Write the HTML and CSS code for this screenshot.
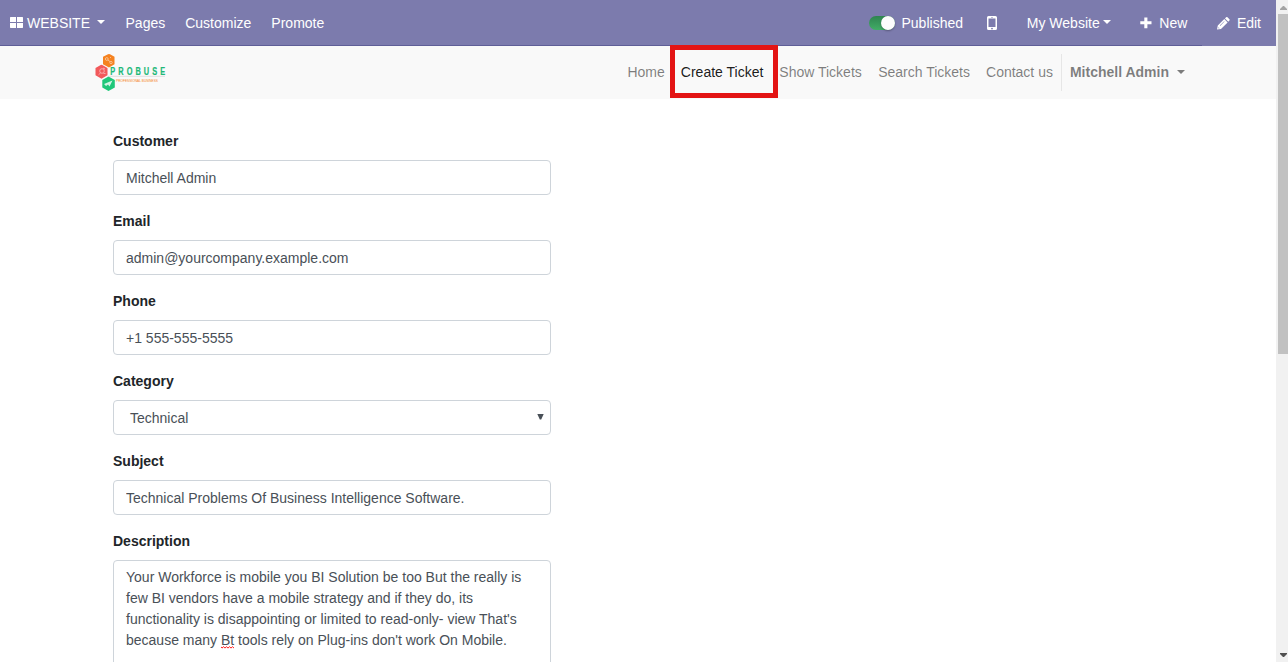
FILE: index.html
```
<!DOCTYPE html>
<html lang="en">
<head>
<meta charset="utf-8">
<title>Create Ticket</title>
<link rel="stylesheet" href="styles.css">
</head>
<body>
<div class="window">
  <div class="page">
    <header class="topbar">
      <nav class="topbar-left">
        <a class="brand"><svg class="icon-grid" width="13" height="11" viewBox="0 0 13 11"><path fill="#fff" d="M.5 0H6v5H0V.5zM7 0h5.500l.5.500V5H7zM0 6h6v5H.5l-.5-.5zM7 6h6v4.500l-.5.500H7z"/></svg>WEBSITE<i class="caret"></i></a>
        <a>Pages</a><a>Customize</a><a>Promote</a>
      </nav>
      <nav class="topbar-right">
        <a class="published"><span class="switch"></span>Published</a>
        <a class="mobile"><svg width="10" height="14" viewBox="0 0 10 14"><path fill="#fff" fill-rule="evenodd" d="M1.500 0h7Q10 0 10 1.500v11Q10 14 8.500 14h-7Q0 14 0 12.500v-11Q0 0 1.500 0zM1.500 2.500v8.500h7V2.500zM4 1v.6h2V1zM5 11.700a.8.8 0 1 0 .01 0z"/></svg></a>
        <a class="site">My Website<i class="caret"></i></a>
        <a class="new"><svg width="12" height="12" viewBox="0 0 12 12"><path fill="#fff" d="M4.300.5h3.100v3.800H11.500v3H7.400v3.900H4.300V7.300H.3v-3h4z"/></svg>New</a>
        <a class="edit"><svg width="13" height="13" viewBox="0 0 13 13"><path fill="#fff" fill-rule="evenodd" d="M0 12.500l.8-3.900L7.300 2.100l3.300 3.300L4 12zM1.500 10.300l-.2.700.5.500.8-.2zM8 1.400L9.100.3q.7-.6 1.400 0l1.900 1.900q.6.700 0 1.400l-1.100 1.100zM2.800 8.600l.3.300 4.400-4.400-.3-.3z"/></svg>Edit</a>
      </nav>
    </header>
    <div class="sitebar">
      <div class="logo">
        <svg width="84" height="40" viewBox="0 0 84 40">
          <path fill="#f58220" d="M14 1.200Q15 .6 16 1.200l4.500 2.500v7.500L15 14.500l-6-3.300V3.700z"/>
          <path fill="#f2595b" d="M8.300 12q-.8-.5-1.600 0L1.500 15v7.300l6 3.500 6-3.500V15z"/>
          <path fill="#1fc779" d="M14.500 23.500l6.300 3.500v7.500l-6.300 3.500-6.200-3.500V27z"/>
          <g fill="none" stroke="#fff" stroke-width=".8" opacity=".6"><circle cx="12.800" cy="6" r="1.400"/><circle cx="17" cy="9.500" r="1.200"/><path d="M14 7l2 1.600M16 4l1 1"/><circle cx="8" cy="18" r="2.300"/><path d="M6.500 20l-2 1.800M9 15l2 1M9.500 20.500h2"/></g>
          <path fill="#fff" opacity=".8" d="M10 31l8.500-3.500-3 6-1.500-2-2 1.500z"/>
          <path stroke="#ccc" stroke-width=".6" d="M13.500 23.300H71"/>
          <text class="logo-name" transform="translate(16.300 21.800) scale(.74 1)" textLength="74">PROBUSE</text>
          <text class="logo-tag" x="22" y="28.700" textLength="42" lengthAdjust="spacingAndGlyphs">PROFESSIONAL BUSINESS</text>
        </svg>
      </div>
      <nav class="menu">
        <a>Home</a><a class="active">Create Ticket<span class="highlight"></span></a><a class="show">Show Tickets</a><a>Search Tickets</a><a>Contact us</a>
        <a class="user">Mitchell Admin<i class="caret"></i></a>
      </nav>
    </div>
    <form class="form">
      <label>Customer</label><input class="field" value="Mitchell Admin">
      <label>Email</label><input class="field" value="admin@yourcompany.example.com">
      <label>Phone</label><input class="field" value="+1 555-555-5555">
      <label>Category</label>
      <div class="field select"><span>Technical</span><svg width="7" height="6" viewBox="0 0 7 6"><path fill="#495057" d="M.3 0h6.400L4.200 5.500H2.800z"/></svg></div>
      <label>Subject</label><input class="field" value="Technical Problems Of Business Intelligence Software.">
      <label>Description</label>
      <div class="field area">Your Workforce is mobile you BI Solution be too But the really is<br>few BI vendors have a mobile strategy and if they do, its<br>functionality is disappointing or limited to read-only- view That's<br>because many <span class="misspelled">Bt<svg width="13" height="3" viewBox="0 0 13 3"><path fill="none" stroke="#f00" stroke-width=".9" d="M0 .7l1 1.400 1.500-1.400L4 2.100 5.500.7 7 2.100 8.500.7 10 2.100 11.500.7l1.500 1.400"/></svg></span> tools rely on Plug-ins don't work On Mobile.</div>
    </form>
  </div>
  <div class="scrollbar">
    <svg width="7" height="4" viewBox="0 0 7 4"><path fill="#a3a3a3" d="M3 0h1l3 3v1H0V3z"/></svg>
    <div class="thumb"></div>
    <svg class="down" width="7" height="4" viewBox="0 0 7 4"><path fill="#505050" d="M0 0h7v1L4 4H3L0 1z"/></svg>
  </div>
</div>
</body>
</html>
```
FILE: styles.css
```
* { box-sizing: border-box; }
body {
  margin: 0;
  font: 14px/21px "Liberation Sans", Arial, sans-serif;
  color: #212529;
  background: #fff;
}
.window { display: flex; height: 662px; overflow: hidden; }
.page { flex: 1; min-width: 0; }
a { white-space: nowrap; }
.topbar {
  display: flex;
  justify-content: space-between;
  height: 46px;
  background: #7c7bad;
  color: #fff;
}
.topbar-left, .topbar-right { display: flex; }
.topbar-left { flex: 1; border-bottom: 1px solid #5f5e97; }
.topbar a {
  display: flex;
  align-items: center;
  height: 45px;
  padding: 1px 10px 0;
}
.topbar .brand { padding-right: 10.500px; }
.topbar-right a { border-bottom: 1px solid #5f5e97; height: 46px; }
.topbar-right .edit { border-bottom-color: transparent; }
.icon-grid { margin: -1px 4px 0 0; }
.caret {
  border: 4px solid transparent;
  border-top-color: currentColor;
  border-bottom: 0;
}
.topbar .caret { margin-top: -2px; }
.brand .caret { margin-left: 7px; }
.site .caret { margin-left: 3.600px; }
.switch {
  display: flex;
  justify-content: flex-end;
  width: 26px;
  height: 14px;
  margin-right: 7px;
  border-radius: 7px;
  background: linear-gradient(#2f8450, #42ad66);
}
.switch::after {
  content: "";
  width: 14px;
  height: 14px;
  border-radius: 50%;
  background: #fcfcfc;
  box-shadow: 0 1px 2px rgba(0, 0, 0, .3);
}
.topbar .published { padding-right: 12px; }
.topbar .mobile { padding-left: 12px; padding-right: 14.800px; }
.topbar .site { padding-left: 15px; padding-right: 15px; }
.topbar .new { padding-left: 14px; padding-right: 14.600px; }
.new svg { margin: -1px 7px 0 0; }
.topbar .edit { padding-left: 15px; padding-right: 15px; }
.edit svg { margin-right: 7px; }
.sitebar {
  display: flex;
  justify-content: space-between;
  align-items: center;
  height: 53px;
  padding: 0 83px 0 94px;
  background: #f9f9f9;
}
.logo svg { display: block; margin-top: 1px; overflow: visible; }
.logo-name { font: bold 10px "Liberation Sans", sans-serif; fill: #20b878; stroke: #20b878; stroke-width: .2px; }
.logo-tag { font: 4.200px "Liberation Sans", sans-serif; fill: #f58220; }
.menu { display: flex; align-items: center; color: rgba(0, 0, 0, .5); }
.menu a { position: relative; padding: 8px; }
.menu .active { color: rgba(0, 0, 0, .9); }
.menu .show { padding-right: 8.400px; }
.highlight {
  position: absolute;
  left: -2.600px;
  top: -9px;
  width: 108px;
  height: 53px;
  border: 5px solid #e31414;
}
.menu .user {
  display: flex;
  align-items: center;
  border-left: 1px solid #e6e6e6;
  font-weight: bold;
}
.user .caret { margin: -2px 0 0 8px; }
.form {
  display: flex;
  flex-direction: column;
  width: 438px;
  margin: 32px 0 0 113px;
}
label { margin-bottom: 8px; font-weight: bold; }
.field {
  width: 438px;
  height: 35px;
  margin: 0 0 16px;
  padding: 6px 12px;
  border: 1px solid #ced4da;
  border-radius: 4px;
  background: #fff;
  color: #495057;
  font: inherit;
}
.select {
  display: flex;
  justify-content: space-between;
  align-items: center;
  padding: 1px 6px 0 16px;
}
.select svg { margin-top: -3px; }
.area { height: 120px; white-space: nowrap; }
.misspelled { position: relative; }
.misspelled svg { position: absolute; left: 0; bottom: -1px; }
.scrollbar {
  display: flex;
  flex-direction: column;
  align-items: center;
  width: 12px;
  padding: 6px 0 5px 2px;
  background: #f1f1f1;
}
.thumb { width: 10px; height: 340px; margin-top: 4px; background: #c1c1c1; }
.down { margin-top: auto; }
```
